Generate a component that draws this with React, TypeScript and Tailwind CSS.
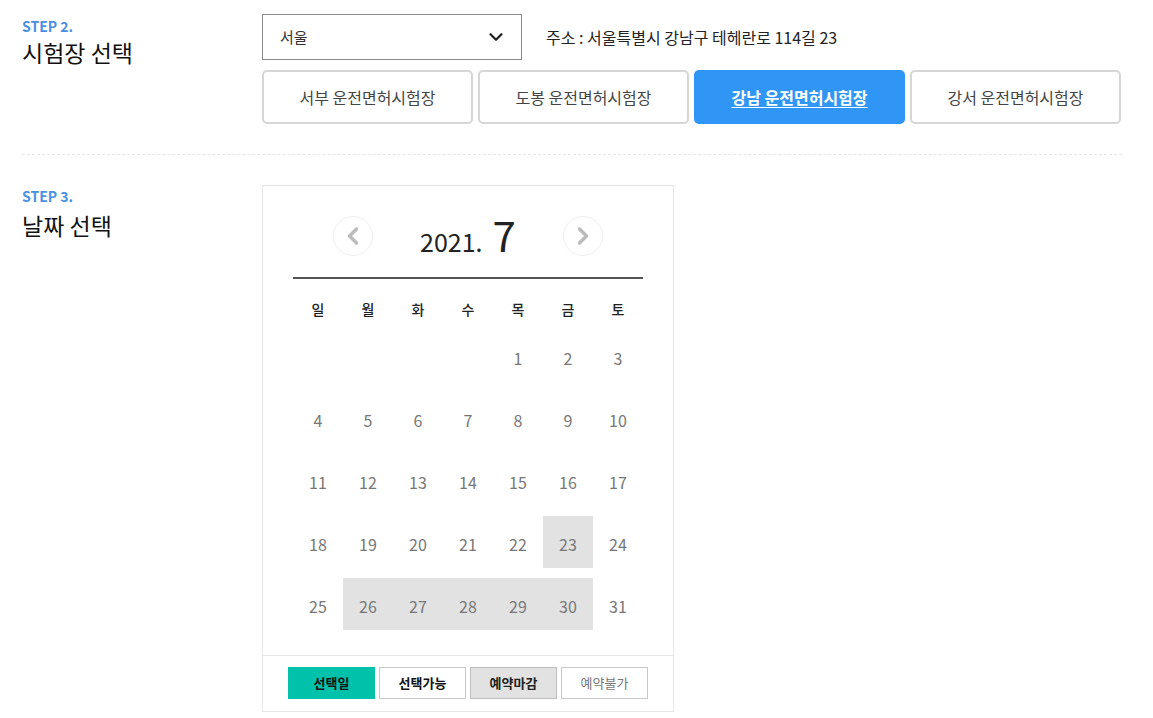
import { ChevronDown, ChevronLeft, ChevronRight } from "lucide-react";

const centers = ["서부 운전면허시험장", "도봉 운전면허시험장", "강남 운전면허시험장", "강서 운전면허시험장"];
const weekdays = ["일", "월", "화", "수", "목", "금", "토"];

// July 2021 starts on Thursday
const days: (number | null)[] = [null, null, null, null, ...Array.from({ length: 31 }, (_, i) => i + 1)];
const closed = [23, 26, 27, 28, 29, 30];

function StepLabel({ step, title, gap }: { step: string; title: string; gap: string }) {
    return (
        <div className="w-[240px] shrink-0">
            <div className="text-[14px] leading-[18px] font-bold text-[#4a90e2]">{step}</div>
            <div className={`text-[23px] leading-[30px] text-[#111] ${gap}`}>{title}</div>
        </div>
    );
}

export default function App() {
    return (
        <div className="bg-white min-h-[718px] pl-[22px] pt-[14px] font-['Noto_Sans_CJK_KR',sans-serif] text-[#222]">
            {/* STEP 2 */}
            <div className="flex">
                <div className="pt-[3px]">
                    <StepLabel step="STEP 2." title="시험장 선택" gap="mt-[2px]" />
                </div>
                <div>
                    <div className="flex items-center gap-[24px]">
                        <div className="w-[260px] h-[46px] border border-[#8a8a8a] flex items-center justify-between pl-[17px] pr-[14px]">
                            <span className="text-[15px] text-[#333]">서울</span>
                            <ChevronDown className="w-[22px] h-[22px] text-[#222]" strokeWidth={2.5} />
                        </div>
                        <span className="text-[16px] text-[#222]">주소 : 서울특별시 강남구 테헤란로 114길 23</span>
                    </div>
                    <div className="flex gap-[5px] mt-[10px]">
                        {centers.map((name, i) =>
                            i === 2 ? (
                                <button
                                    key={name}
                                    className="w-[211px] h-[54px] rounded-[5px] bg-[#3096f5] text-white text-[16px] font-bold underline underline-offset-[3px]"
                                >
                                    {name}
                                </button>
                            ) : (
                                <button
                                    key={name}
                                    className="w-[211px] h-[54px] rounded-[5px] border-2 border-[#d6d6d6] bg-white text-[#444] text-[16px]"
                                >
                                    {name}
                                </button>
                            )
                        )}
                    </div>
                </div>
            </div>

            <div className="w-[1100px] mt-[30px] border-t border-dashed border-[#e6e6e6]" />

            {/* STEP 3 */}
            <div className="flex mt-[30px]">
                <div className="pt-[2px]">
                    <StepLabel step="STEP 3." title="날짜 선택" gap="mt-[5px]" />
                </div>
                <div className="w-[412px] border border-[#e6e6e6]">
                    <div className="px-[30px] pt-[30px] pb-[25px]">
                        <div className="flex items-center justify-between px-[40px] h-[40px]">
                            <button className="w-[40px] h-[40px] rounded-full border border-[#eeeeee] flex items-center justify-center">
                                <ChevronLeft className="w-[28px] h-[28px] text-[#bbbbbb]" strokeWidth={3} />
                            </button>
                            <div className="flex items-baseline gap-[10px] text-[#222] translate-y-[1px]">
                                <span className="text-[25px]">2021.</span>
                                <span className="text-[42px] leading-none">7</span>
                            </div>
                            <button className="w-[40px] h-[40px] rounded-full border border-[#eeeeee] flex items-center justify-center">
                                <ChevronRight className="w-[28px] h-[28px] text-[#bbbbbb]" strokeWidth={3} />
                            </button>
                        </div>
                        <div className="mt-[21px] h-[2px] bg-[#555]" />
                        <div className="grid grid-cols-7 mt-[10px] h-[40px] items-center">
                            {weekdays.map((d) => (
                                <div key={d} className="text-center text-[14px] font-medium text-[#222]">
                                    {d}
                                </div>
                            ))}
                        </div>
                        <div className="grid grid-cols-7 gap-y-[10px] mt-[1px]">
                            {days.map((d, i) => (
                                <div
                                    key={i}
                                    className={`h-[52px] flex items-center justify-center text-[16px] text-[#777] pt-[3px] ${
                                        d && closed.includes(d) ? "bg-[#e2e2e2]" : ""
                                    }`}
                                >
                                    {d}
                                </div>
                            ))}
                        </div>
                    </div>
                    <div className="border-t border-[#e6e6e6] pt-[11px] pb-[12px] flex justify-center gap-[4px]">
                        <div className="w-[87px] h-[32px] bg-[#00c1aa] flex items-center justify-center text-[13px] font-bold text-[#111]">
                            선택일
                        </div>
                        <div className="w-[87px] h-[32px] border border-[#c8c8c8] bg-white flex items-center justify-center text-[13px] font-bold text-[#111]">
                            선택가능
                        </div>
                        <div className="w-[87px] h-[32px] border border-[#bdbdbd] bg-[#e2e2e2] flex items-center justify-center text-[13px] font-bold text-[#222]">
                            예약마감
                        </div>
                        <div className="w-[87px] h-[32px] border border-[#c8c8c8] bg-white flex items-center justify-center text-[13px] text-[#777]">
                            예약불가
                        </div>
                    </div>
                </div>
            </div>
        </div>
    );
}
